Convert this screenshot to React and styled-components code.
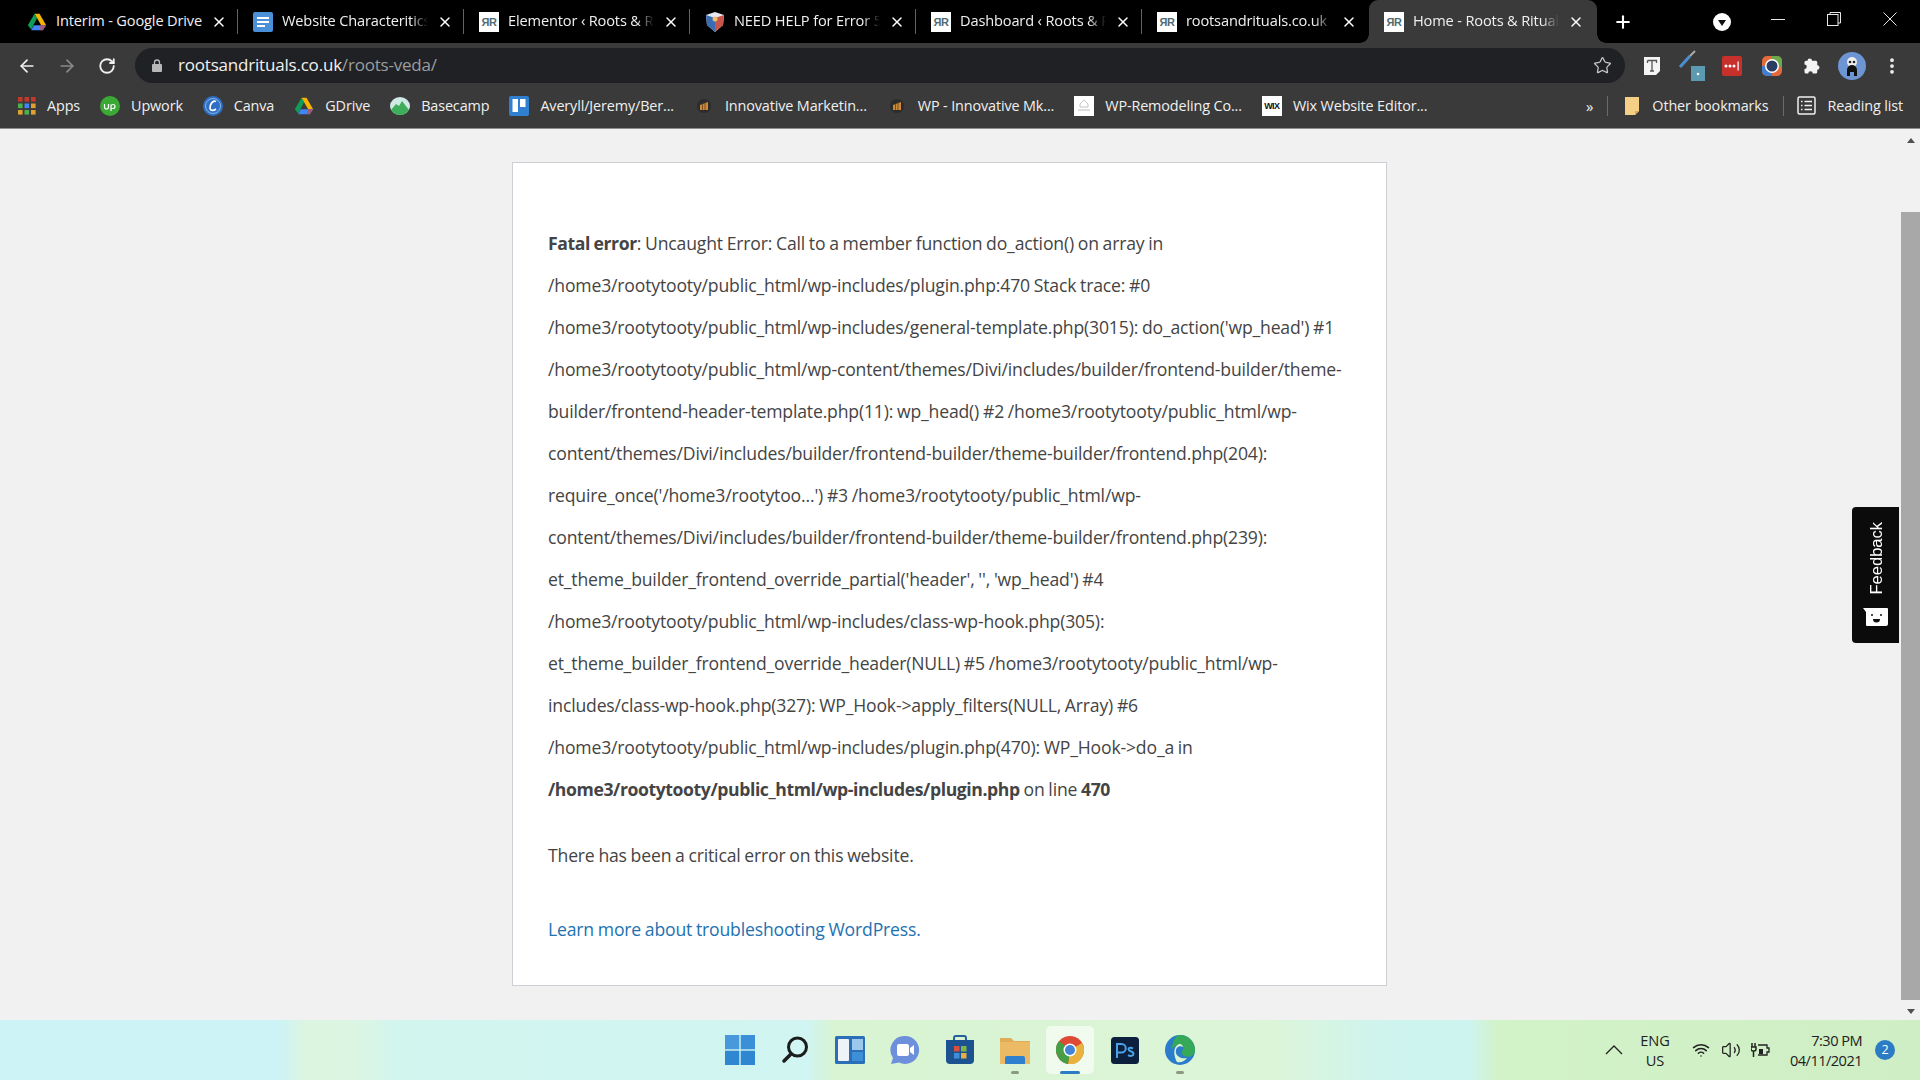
import React from 'react';
import styled, { createGlobalStyle } from 'styled-components';
import { ArrowLeft, ArrowRight, RotateCw, Star, X, Plus, Volume2, Wifi, MoreVertical } from 'lucide-react';

const Global = createGlobalStyle`
  html, body { margin: 0; padding: 0; height: 100%; overflow: hidden; }
  body { font-family: "Open Sans", "Noto Sans", sans-serif; background: #f1f1f1; }
  * { box-sizing: border-box; }
`;

const Screen = styled.div`
  width: 1920px;
  height: 1080px;
  display: flex;
  flex-direction: column;
  overflow: hidden;
`;

const TabStrip = styled.div`
  height: 43px;
  background: #000;
  display: flex;
  align-items: stretch;
  padding-left: 13px;
  flex: none;
`;

const Tab = styled.div`
  position: relative;
  width: ${p => (p.$active ? 228 : 226)}px;
  display: flex;
  align-items: center;
  padding: 0 ${p => (p.$active ? 13 : 12)}px 0 ${p => (p.$active ? 15 : 14)}px;
  gap: 9px;
  color: #f0f0f0;
  background: ${p => (p.$active ? '#3a3a3a' : 'transparent')};
  border-radius: ${p => (p.$active ? '9px 9px 0 0' : '0')};
  &::after {
    content: '';
    display: ${p => (p.$sep ? 'block' : 'none')};
    position: absolute;
    right: 1px;
    top: 9px;
    bottom: 9px;
    width: 1px;
    background: #5f6368;
  }
  &::before {
    content: '';
    display: ${p => (p.$active ? 'block' : 'none')};
    position: absolute;
    left: -9px;
    right: -9px;
    bottom: 0;
    height: 9px;
    z-index: 0;
    background:
      radial-gradient(circle at 0 0, #000 8.5px, #3a3a3a 9px) left bottom / 9px 9px no-repeat,
      radial-gradient(circle at 100% 0, #000 8.5px, #3a3a3a 9px) right bottom / 9px 9px no-repeat;
  }
`;

const Favicon = styled.span`
  width: 20px;
  height: 20px;
  flex: none;
  display: inline-flex;
  align-items: center;
  justify-content: center;
  position: relative;
  z-index: 1;
  background: ${p => (p.$white ? '#fff' : 'transparent')};
  color: ${p => p.$ink || '#4f6b73'};
  font: 700 ${p => p.$size || 11}px "Liberation Sans", sans-serif;
  letter-spacing: -0.5px;
`;

const TabTitle = styled.span`
  flex: 1;
  min-width: 0;
  white-space: nowrap;
  overflow: hidden;
  font-size: 14.6px;
  line-height: 20px;
  margin-top: -3px;
  letter-spacing: -0.15px;
  position: relative;
  z-index: 1;
  -webkit-mask-image: linear-gradient(to right, #000 88%, transparent 100%);
  mask-image: linear-gradient(to right, #000 88%, transparent 100%);
`;

const PlainTitle = styled(TabTitle)`
  -webkit-mask-image: none;
  mask-image: none;
`;

const TabClose = styled(X)`
  flex: none;
  position: relative;
  z-index: 1;
  color: #fff;
`;

const NewTab = styled.div`
  width: 40px;
  margin-left: 6px;
  display: flex;
  align-items: center;
  justify-content: center;
  color: #fff;
`;

const WindowControls = styled.div`
  margin-left: auto;
  padding-right: 2px;
  display: flex;
  align-items: flex-start;
`;

const ProfileDot = styled.div`
  width: 56px;
  height: 43px;
  display: flex;
  align-items: center;
  justify-content: center;
`;

const WinButton = styled.div`
  width: 56px;
  height: 37px;
  display: flex;
  align-items: center;
  justify-content: center;
`;

const Toolbar = styled.div`
  height: 40px;
  background: #3a3a3a;
  display: flex;
  align-items: flex-end;
  padding-left: 7px;
  flex: none;
`;

const NavGroup = styled.div`
  display: flex;
  height: 35px;
  align-items: center;
`;

const NavBtn = styled.div`
  width: 40px;
  display: flex;
  justify-content: center;
  color: ${p => (p.$off ? '#8a8a8a' : '#f0f0f0')};
`;

const Omnibox = styled.div`
  width: 1490px;
  height: 35px;
  margin-left: 8px;
  border-radius: 18px;
  background: #202124;
  display: flex;
  align-items: center;
  padding: 0 13px 0 17px;
  font-size: 17px;
  line-height: 20px;
  letter-spacing: -0.2px;
  color: #f1f1f1;
`;

const UrlText = styled.div`
  margin-left: 16px;
  margin-top: -1px;
  flex: 1;
`;

const UrlPath = styled.span`
  color: #9a9da1;
`;

const Extensions = styled.div`
  display: flex;
  margin-left: 7px;
  height: 35px;
  align-items: center;
`;

const ExtSlot = styled.div`
  width: 40px;
  display: flex;
  justify-content: center;
  align-items: center;
  color: #f1f1f1;
`;

const BookmarkBar = styled.div`
  height: 46px;
  background: #3a3a3a;
  border-bottom: 1px solid #8d8d8d;
  display: flex;
  align-items: center;
  padding: 0 17px 0 18px;
  flex: none;
  color: #f0f0f0;
  font-size: 14.4px;
  letter-spacing: -0.13px;
`;

const Bookmark = styled.div`
  display: flex;
  align-items: center;
  gap: 11px;
  margin-right: 20px;
  white-space: nowrap;
`;

const BarRight = styled.div`
  margin-left: auto;
  display: flex;
  align-items: center;
`;

const Chevrons = styled.span`
  font-size: 15px;
  margin-right: 14px;
`;

const BarSep = styled.span`
  width: 1px;
  height: 20px;
  background: #6a6a6a;
  margin-right: ${p => p.$mr || 16}px;
`;

const BarItem = styled.div`
  display: flex;
  align-items: center;
  gap: 12px;
  margin-right: ${p => p.$mr || 0}px;
`;

const Viewport = styled.div`
  flex: 1;
  min-height: 0;
  display: flex;
  position: relative;
  background: #f1f1f1;
`;

const Page = styled.div`
  flex: 1;
  min-width: 0;
`;

const Card = styled.div`
  width: 875px;
  margin: 33px 0 0 512px;
  height: 824px;
  background: #fff;
  border: 1px solid #ccd0d4;
  padding: 59px 35px 0;
  color: #444;
  font-size: 17.6px;
  letter-spacing: -0.17px;
  word-spacing: -0.6px;
  b { letter-spacing: -0.4px; font-weight: 700; }
`;

const ErrorText = styled.div`
  line-height: 42px;
  white-space: nowrap;
`;

const Notice = styled.div`
  line-height: 30px;
  margin-top: 30px;
`;

const LearnMore = styled.a`
  display: block;
  line-height: 30px;
  margin-top: 44px;
  color: #2271b1;
  text-decoration: none;
`;

const Scrollbar = styled.div`
  width: 19px;
  display: flex;
  flex-direction: column;
  align-items: center;
  padding: 9px 0 6px;
  background: #f1f1f1;
`;

const Arrow = styled.span`
  width: 0;
  height: 0;
  flex: none;
  margin-top: ${p => (p.$down ? 'auto' : '0')};
  border-left: 4.5px solid transparent;
  border-right: 4.5px solid transparent;
  border-${p => (p.$down ? 'top' : 'bottom')}: 5px solid #505050;
`;

const Thumb = styled.div`
  width: 100%;
  height: 788px;
  margin-top: 69px;
  background: #a8a8a8;
`;

const Feedback = styled.div`
  position: absolute;
  right: 21px;
  top: 378px;
  width: 47px;
  height: 136px;
  background: #0b0b0b;
  border-radius: 4px 0 0 4px;
  color: #fff;
  display: flex;
  flex-direction: column;
  align-items: center;
  justify-content: space-between;
  padding: 15px 0 16px;
`;

const FeedbackLabel = styled.span`
  writing-mode: vertical-rl;
  transform: rotate(180deg);
  margin-left: 2px;
  font: 400 16.5px "Liberation Sans", sans-serif;
`;

const Taskbar = styled.div`
  height: 60px;
  flex: none;
  position: relative;
  display: flex;
  align-items: center;
  justify-content: center;
  background: linear-gradient(90deg, #cdf3f6 0%, #cdf3f6 14.5%, #dcf5e0 16%, #dcf5e2 18.5%, #d2f5ee 20.5%, #d0f5f2 42%, #d8f4d2 43.5%, #dcf5d8 66%, #cff4ee 72%, #cdf4f0 76.500%, #d2f2c8 78%, #cfeec5 100%);
`;

const TaskIcons = styled.div`
  display: flex;
  gap: 7px;
`;

const TaskSlot = styled.div`
  position: relative;
  width: 48px;
  height: 48px;
  display: flex;
  align-items: center;
  justify-content: center;
  border-radius: 5px;
  background: ${p => (p.$active ? 'rgba(255,255,255,0.6)' : 'transparent')};
`;

const RunDot = styled.span`
  position: absolute;
  bottom: 0;
  left: 50%;
  transform: translateX(-50%);
  width: ${p => (p.$active ? 20 : 8)}px;
  height: 3px;
  border-radius: 2px;
  background: ${p => (p.$active ? '#2b7cc4' : '#8a9a80')};
`;

const Tray = styled.div`
  position: absolute;
  right: 0;
  top: 0;
  bottom: 0;
  display: flex;
  align-items: center;
  color: #222;
  font-size: 14.6px;
  line-height: 20px;
`;

const TrayIcon = styled.div`
  display: flex;
  align-items: center;
  justify-content: center;
  width: 30px;
`;

const Lang = styled.div`
  width: 50px;
  margin: 0 6px 0 7px;
  text-align: center;
`;

const Clock = styled.div`
  width: 71px;
  text-align: right;
  margin: 0 13px 0 15px;
  white-space: nowrap;
  display: flex;
  flex-direction: column;
  align-items: flex-end;
  letter-spacing: -0.55px;
`;

const Badge = styled.div`
  width: 20px;
  height: 20px;
  margin-right: 25px;
  border-radius: 50%;
  background: #2b7cc4;
  color: #fff;
  font-size: 12.5px;
  display: flex;
  align-items: center;
  justify-content: center;
`;

const DriveIcon = ({ size = 20 }) => (
  <svg width={size} height={size} viewBox="0 0 24 24">
    <path d="M9 2h6l8 14h-6z" fill="#f4b400" />
    <path d="M9 2l3 5.500L5 21l-4-5z" fill="#0f9d58" />
    <path d="M8 16h15l-4 6H5z" fill="#4285f4" />
    <path d="M15.500 16H23l-4 6h-3z" fill="#db4437" opacity=".65" />
  </svg>
);

const DocsIcon = () => (
  <svg width="20" height="20" viewBox="0 0 20 20">
    <rect width="20" height="20" rx="2" fill="#4a90d9" />
    <path d="M4 6h12M4 10h12M4 14h8" stroke="#fff" strokeWidth="2" />
  </svg>
);

const ShieldIcon = () => (
  <svg width="20" height="22" viewBox="0 0 20 22">
    <path d="M1 4l9-3 9 3-1 10-8 7-8-7z" fill="#e8e8f2" />
    <path d="M1 4l9 3v14l-8-7z" fill="#3a6cb5" />
    <path d="M10 7l9-3-1 10-8 7z" fill="#c9544a" />
    <circle cx="10" cy="8" r="2.500" fill="#e8c070" />
  </svg>
);

const RootsMark = () => <Favicon $white>ЯR</Favicon>;

const AppsIcon = () => (
  <svg width="18" height="18" viewBox="0 0 18 18">
    {[['#c0392b', '#c0392b', '#c0392b'], ['#4caf50', '#4285f4', '#e0a030'], ['#e0a030', '#4caf50', '#e0a030']].map((row, y) =>
      row.map((c, x) => <rect key={`${x}${y}`} x={x * 6.5} y={y * 6.5} width="4.6" height="4.6" fill={c} />)
    )}
  </svg>
);

const UpworkIcon = () => (
  <Favicon>
    <svg width="20" height="20" viewBox="0 0 20 20">
      <circle cx="10" cy="10" r="10" fill="#3aaa35" />
      <path d="M4.500 8v3a2 2 0 0 0 4 0V8M11 15V8.500M11 10.500a2 2 0 1 1 2 2h-2" stroke="#fff" strokeWidth="1.200" fill="none" />
    </svg>
  </Favicon>
);

const CanvaIcon = () => (
  <svg width="20" height="20" viewBox="0 0 20 20">
    <circle cx="10" cy="10" r="10" fill="#2f6fc4" />
    <circle cx="10" cy="10" r="7.500" fill="none" stroke="#9cc6f0" strokeWidth=".8" />
    <path d="M13 5.500C9.500 4 6.500 9 7 12.500c.4 2.500 3.500 2.500 6 .5" stroke="#fff" strokeWidth="1.700" fill="none" />
  </svg>
);

const BasecampIcon = () => (
  <svg width="20" height="18" viewBox="0 0 20 18">
    <ellipse cx="10" cy="9" rx="10" ry="9" fill="#cfe9e4" />
    <path d="M1 13l5-6 3 2 3-5 7 9c-2 3-5 5-9 5s-7-2-9-5z" fill="#3fae5a" />
  </svg>
);

const TrelloIcon = () => (
  <svg width="20" height="20" viewBox="0 0 20 20">
    <rect width="20" height="20" rx="2" fill="#2f80d0" />
    <rect x="3.500" y="3" width="5.500" height="13" fill="#fff" />
    <rect x="11" y="3" width="5.500" height="8" fill="#fff" />
  </svg>
);

const FenceIcon = () => (
  <Favicon>
    <svg width="14" height="14" viewBox="0 0 14 14">
      <circle cx="7" cy="7" r="7" fill="#2c2c2c" />
      <path d="M3 6l8-3v8H3z" fill="#c98a3c" />
      <path d="M5.500 5v6M8 4v7" stroke="#7a4f1d" />
    </svg>
  </Favicon>
);

const RemodelIcon = () => (
  <Favicon $white>
    <svg width="14" height="14" viewBox="0 0 14 14">
      <path d="M7 1l4 4v3H3V5z" fill="none" stroke="#c4c4c4" />
      <path d="M1 11h12" stroke="#bdbdbd" />
    </svg>
  </Favicon>
);

const FolderIcon = () => (
  <svg width="16" height="20" viewBox="0 0 16 20">
    <path d="M1 1h14v14l-4 4H1z" fill="#f6cf87" />
    <path d="M11 19v-4h4" fill="#dca653" />
  </svg>
);

const ReadingListIcon = () => (
  <svg width="19" height="19" viewBox="0 0 19 19" fill="none" stroke="#f0f0f0" strokeWidth="1.500">
    <rect x="1" y="1" width="17" height="17" rx="1.500" />
    <path d="M4 5.500h1.500M7.500 5.500H15M4 9.500h1.500M7.500 9.500H15M4 13.500h1.500M7.500 13.500H15" />
  </svg>
);

const ProfileMenu = () => (
  <svg width="18" height="18" viewBox="0 0 18 18">
    <circle cx="9" cy="9" r="9" fill="#fff" />
    <path d="M5 7h8l-4 6z" fill="#111" />
  </svg>
);

const MinimizeIcon = () => (
  <svg width="14" height="14" viewBox="0 0 14 14" stroke="#e8e8e8">
    <path d="M0 7.500h14" />
  </svg>
);

const RestoreIcon = () => (
  <svg width="14" height="14" viewBox="0 0 14 14" fill="none" stroke="#e8e8e8">
    <rect x=".5" y="2.500" width="10.500" height="11" />
    <path d="M3 2.500V.5h10.500v10.500H11" />
  </svg>
);

const CloseWinIcon = () => (
  <svg width="14" height="14" viewBox="0 0 14 14" stroke="#e8e8e8" strokeWidth="1">
    <path d="M.5.5l13 13M13.500.5l-13 13" />
  </svg>
);

const LockIcon = () => (
  <svg width="10" height="13" viewBox="0 0 10 13">
    <path d="M2.500 5V3.500a2.500 2.500 0 0 1 5 0V5" stroke="#b8b8b8" fill="none" strokeWidth="1.300" />
    <rect y="5" width="10" height="8" rx="1" fill="#b8b8b8" />
  </svg>
);

const NotesExt = () => (
  <svg width="16" height="20" viewBox="0 0 16 20">
    <path d="M0 1h16v14l-4 4H0z" fill="#f4f4f4" />
    <path d="M3.500 4.500h9V7M8 4.500V15M6 15h4M3.500 7V4.500" stroke="#555" strokeWidth="1.300" fill="none" />
  </svg>
);

const DropperExt = () => (
  <svg width="28" height="32" viewBox="0 0 28 32">
    <path d="M2 17l10-11" stroke="#4a8fd0" strokeWidth="3" />
    <path d="M12 6l5-5" stroke="#aaa" strokeWidth="2" />
    <rect x="13" y="16" width="14" height="15" fill="#5b9ab0" />
    <circle cx="20" cy="24" r="1.300" fill="#fff" />
  </svg>
);

const LastPassExt = () => (
  <svg width="20" height="20" viewBox="0 0 20 20">
    <rect width="20" height="20" rx="2" fill="#c8302b" />
    <circle cx="4" cy="10" r="1.500" fill="#fff" />
    <circle cx="8" cy="10" r="1.500" fill="#fff" />
    <circle cx="12" cy="10" r="1.500" fill="#fff" />
    <rect x="15.500" y="5.500" width="1.200" height="9" fill="#fff" />
  </svg>
);

const PocketExt = () => (
  <svg width="20" height="22" viewBox="0 0 20 22">
    <rect y="1" width="20" height="20" rx="5" fill="#e36a3a" />
    <path d="M10 1h5a5 5 0 0 1 5 5v6H10z" fill="#6aaa4a" />
    <path d="M0 11h10v10H5a5 5 0 0 1-5-5z" fill="#3f7fd0" />
    <circle cx="10" cy="11" r="7" fill="#fff" />
    <circle cx="10" cy="11" r="5.500" fill="#2b3d63" />
  </svg>
);

const PuzzleExt = () => (
  <svg width="18" height="18" viewBox="0 0 24 24" fill="#f4f4f4">
    <path d="M9 2a3 3 0 0 1 3 3h5a2 2 0 0 1 2 2v4a3 3 0 1 1 0 6v3a2 2 0 0 1-2 2h-4a3 3 0 1 0-6 0H4a2 2 0 0 1-2-2v-4a3 3 0 1 0 0-6V7a2 2 0 0 1 2-2h2a3 3 0 0 1 3-3z" />
  </svg>
);

const AvatarExt = () => (
  <svg width="28" height="28" viewBox="0 0 28 28">
    <circle cx="14" cy="14" r="14" fill="#6d95d3" />
    <circle cx="14" cy="10" r="5" fill="#eee" />
    <circle cx="12" cy="10" r="1.300" fill="#222" />
    <circle cx="16" cy="10" r="1.300" fill="#222" />
    <path d="M9 24v-6a5 5 0 0 1 10 0v6h-3v-4h-4v4z" fill="#111" />
  </svg>
);

const FeedbackFace = () => (
  <svg width="26" height="20" viewBox="0 0 26 20">
    <path d="M0 1h24a1 1 0 0 1 1 1v15a2 2 0 0 1-2 2H4a1 1 0 0 1-1-1V5z" fill="#fff" />
    <circle cx="9" cy="8" r="1" fill="#111" />
    <circle cx="18" cy="8" r="1" fill="#111" />
    <path d="M10 12h7a3.500 3.500 0 0 1-7 0z" fill="#111" />
  </svg>
);

const StartIcon = () => (
  <svg width="30" height="30" viewBox="0 0 30 30" fill="#2f86d1">
    <rect width="14.300" height="14.300" fill="#4898dc" />
    <rect x="15.700" width="14.300" height="14.300" fill="#3a90d8" />
    <rect y="15.700" width="14.300" height="14.300" />
    <rect x="15.700" y="15.700" width="14.300" height="14.300" />
  </svg>
);

const SearchIcon = () => (
  <svg width="28" height="28" viewBox="0 0 28 28" fill="none" stroke="#1c1c1c">
    <circle cx="16.500" cy="11" r="9" strokeWidth="3" />
    <path d="M10 18l-7 7" strokeWidth="3.500" strokeLinecap="round" />
  </svg>
);

const WidgetsIcon = () => (
  <svg width="30" height="28" viewBox="0 0 30 28">
    <rect width="30" height="28" rx="1.500" fill="#2a6fb8" />
    <rect x="3" y="3" width="11" height="22" rx="1" fill="#eef3f8" />
    <rect x="17" y="3" width="11" height="11" fill="#9cc8ec" />
    <rect x="17" y="16" width="11" height="9" fill="#3d8fd6" />
  </svg>
);

const ChatIcon = () => (
  <svg width="30" height="30" viewBox="0 0 30 30">
    <path d="M15 1a14 14 0 1 1-6 26.600L1 29l2-6A14 14 0 0 1 15 1z" fill="#6d8fdc" />
    <rect x="7" y="9" width="12" height="12" rx="2" fill="#fff" />
    <path d="M20 13l4-3v10l-4-3z" fill="#fff" />
  </svg>
);

const StoreIcon = () => (
  <svg width="30" height="30" viewBox="0 0 30 30">
    <path d="M9 6V3a2 2 0 0 1 2-2h8a2 2 0 0 1 2 2v3" fill="none" stroke="#245f9e" strokeWidth="2" />
    <path d="M1 5h28v20a4 4 0 0 1-4 4H5a4 4 0 0 1-4-4z" fill="#1d5290" />
    <rect x="9" y="11" width="5.500" height="5.500" fill="#d94f3b" />
    <rect x="16" y="11" width="5.500" height="5.500" fill="#7fb545" />
    <rect x="9" y="18" width="5.500" height="5.500" fill="#3f8fd8" />
    <rect x="16" y="18" width="5.500" height="5.500" fill="#e6ae40" />
  </svg>
);

const ExplorerIcon = () => (
  <svg width="30" height="27" viewBox="0 0 30 27">
    <path d="M0 1h11l3 3h16v23H0z" fill="#e2ab57" />
    <path d="M0 5h30v22H0z" fill="#ecb965" />
    <path d="M5 21a2 2 0 0 1 2-2h16a2 2 0 0 1 2 2v6H5z" fill="#2f80cf" />
  </svg>
);

const ChromeIcon = () => (
  <svg width="28" height="28" viewBox="0 0 28 28">
    <circle cx="14" cy="14" r="14" fill="#dd4b35" />
    <path d="M14 14L2 21A14 14 0 0 1 3 5z" fill="#43a047" />
    <path d="M14 14l12-7a14 14 0 0 1-14 21z" fill="#e8b23c" />
    <path d="M14 14L2 21a14 14 0 0 0 10 7z" fill="#43a047" />
    <circle cx="14" cy="14" r="6.500" fill="#fff" />
    <circle cx="14" cy="14" r="5" fill="#4285d8" />
  </svg>
);

const PsIcon = () => (
  <svg width="28" height="27" viewBox="0 0 28 27">
    <rect width="28" height="27" rx="3.500" fill="#0c1f3d" />
    <path d="M6 21V7h4.500a4 4 0 0 1 0 8.500H6M22 11.500c-2-1.200-4.500-1-4.500.8 0 2.400 5 1.400 5 4.500 0 2.200-3.200 2.700-5.500 1.300" stroke="#4aa2e8" strokeWidth="2" fill="none" />
  </svg>
);

const EdgeIcon = () => (
  <svg width="30" height="30" viewBox="0 0 30 30">
    <circle cx="15" cy="15" r="15" fill="#2b7ccb" />
    <path d="M15 0a15 15 0 0 1 15 15c0 6-6 8-11 6-3-1.500-3-5-1-6 1-3-1-5-3-5-4 0-7 2-9 5C8 5 11 0 15 0z" fill="#35a85a" />
    <path d="M18 12c-4-2-8 1-7 6 1 4 6 6 11 5-3 4-7 5-10 4C9 22 7 12 14 9c2-.5 4 1 4 3z" fill="#d9f4d0" />
  </svg>
);

const BatteryIcon = () => (
  <svg width="20" height="16" viewBox="0 0 20 16" fill="none" stroke="#222" strokeWidth="1.300">
    <path d="M7 3h9v3h2v4h-2v3H7" />
    <rect x="8" y="7" width="4" height="5" fill="#222" stroke="none" />
    <path d="M1 1v4M4 1v4M0 5h5v2a2 2 0 0 1-2 2h-1a2 2 0 0 1-2-2zM2.500 9v6" strokeWidth="1.500" />
  </svg>
);

const TrayChevron = () => (
  <svg width="18" height="20" viewBox="0 0 18 20" fill="none" stroke="#222" strokeWidth="1.300">
    <path d="M1 14l8-8 8 8" />
  </svg>
);

const tabs = [
  { icon: <DriveIcon />, title: 'Interim - Google Drive', plain: true, sep: true },
  { icon: <DocsIcon />, title: 'Website Characteritics of a site', sep: true },
  { icon: <RootsMark />, title: 'Elementor ‹ Roots & Rituals — W', sep: true },
  { icon: <ShieldIcon />, title: 'NEED HELP for Error 500 - Wor', sep: true },
  { icon: <RootsMark />, title: 'Dashboard ‹ Roots & Rituals — W', sep: true },
  { icon: <RootsMark />, title: 'rootsandrituals.co.uk | Home' },
  { icon: <RootsMark />, title: 'Home - Roots & Rituals', active: true },
];

const bookmarks = [
  { icon: <AppsIcon />, label: 'Apps' },
  { icon: <UpworkIcon />, label: 'Upwork' },
  { icon: <CanvaIcon />, label: 'Canva' },
  { icon: <DriveIcon />, label: 'GDrive' },
  { icon: <BasecampIcon />, label: 'Basecamp' },
  { icon: <TrelloIcon />, label: 'Averyll/Jeremy/Ber...' },
  { icon: <FenceIcon />, label: 'Innovative Marketin...' },
  { icon: <FenceIcon />, label: 'WP - Innovative Mk...' },
  { icon: <RemodelIcon />, label: 'WP-Remodeling Co...' },
  { icon: <Favicon $white $ink="#111" $size={9}>WIX</Favicon>, label: 'Wix Website Editor...' },
];

const taskIcons = [
  { icon: <StartIcon /> },
  { icon: <SearchIcon /> },
  { icon: <WidgetsIcon /> },
  { icon: <ChatIcon /> },
  { icon: <StoreIcon /> },
  { icon: <ExplorerIcon />, running: true },
  { icon: <ChromeIcon />, running: true, active: true },
  { icon: <PsIcon /> },
  { icon: <EdgeIcon />, running: true },
];

export default function App() {
  return (
    <Screen>
      <Global />
      <TabStrip>
        {tabs.map(t => {
          const Title = t.plain ? PlainTitle : TabTitle;
          return (
            <Tab key={t.title} $active={t.active} $sep={t.sep}>
              {t.icon}
              <Title>{t.title}</Title>
              <TabClose size={16} strokeWidth={2.2} />
            </Tab>
          );
        })}
        <NewTab><Plus size={20} strokeWidth={2.5} /></NewTab>
        <WindowControls>
          <ProfileDot><ProfileMenu /></ProfileDot>
          <WinButton><MinimizeIcon /></WinButton>
          <WinButton><RestoreIcon /></WinButton>
          <WinButton><CloseWinIcon /></WinButton>
        </WindowControls>
      </TabStrip>

      <Toolbar>
        <NavGroup>
          <NavBtn><ArrowLeft size={20} /></NavBtn>
          <NavBtn $off><ArrowRight size={20} /></NavBtn>
          <NavBtn><RotateCw size={18} strokeWidth={2.4} /></NavBtn>
        </NavGroup>
        <Omnibox>
          <LockIcon />
          <UrlText>rootsandrituals.co.uk<UrlPath>/roots-veda/</UrlPath></UrlText>
          <Star size={19} strokeWidth={1.6} color="#c8c8c8" />
        </Omnibox>
        <Extensions>
          <ExtSlot><NotesExt /></ExtSlot>
          <ExtSlot><DropperExt /></ExtSlot>
          <ExtSlot><LastPassExt /></ExtSlot>
          <ExtSlot><PocketExt /></ExtSlot>
          <ExtSlot><PuzzleExt /></ExtSlot>
          <ExtSlot><AvatarExt /></ExtSlot>
          <ExtSlot><MoreVertical size={20} strokeWidth={2.5} /></ExtSlot>
        </Extensions>
      </Toolbar>

      <BookmarkBar>
        {bookmarks.map(b => (
          <Bookmark key={b.label}>{b.icon}{b.label}</Bookmark>
        ))}
        <BarRight>
          <Chevrons>»</Chevrons>
          <BarSep />
          <BarItem $mr={14}><FolderIcon />Other bookmarks</BarItem>
          <BarSep $mr={13} />
          <BarItem><ReadingListIcon />Reading list</BarItem>
        </BarRight>
      </BookmarkBar>

      <Viewport>
        <Page>
          <Card>
            <ErrorText>
              <b>Fatal error</b>: Uncaught Error: Call to a member function do_action() on array in<br />
              /home3/rootytooty/public_html/wp-includes/plugin.php:470 Stack trace: #0<br />
              /home3/rootytooty/public_html/wp-includes/general-template.php(3015): do_action('wp_head') #1<br />
              /home3/rootytooty/public_html/wp-content/themes/Divi/includes/builder/frontend-builder/theme-<br />
              builder/frontend-header-template.php(11): wp_head() #2 /home3/rootytooty/public_html/wp-<br />
              content/themes/Divi/includes/builder/frontend-builder/theme-builder/frontend.php(204):<br />
              require_once('/home3/rootytoo...') #3 /home3/rootytooty/public_html/wp-<br />
              content/themes/Divi/includes/builder/frontend-builder/theme-builder/frontend.php(239):<br />
              et_theme_builder_frontend_override_partial('header', '', 'wp_head') #4<br />
              /home3/rootytooty/public_html/wp-includes/class-wp-hook.php(305):<br />
              et_theme_builder_frontend_override_header(NULL) #5 /home3/rootytooty/public_html/wp-<br />
              includes/class-wp-hook.php(327): WP_Hook-&gt;apply_filters(NULL, Array) #6<br />
              /home3/rootytooty/public_html/wp-includes/plugin.php(470): WP_Hook-&gt;do_a in<br />
              <b>/home3/rootytooty/public_html/wp-includes/plugin.php</b> on line <b>470</b>
            </ErrorText>
            <Notice>There has been a critical error on this website.</Notice>
            <LearnMore href="#">Learn more about troubleshooting WordPress.</LearnMore>
          </Card>
        </Page>
        <Scrollbar>
          <Arrow />
          <Thumb />
          <Arrow $down />
        </Scrollbar>
        <Feedback>
          <FeedbackLabel>Feedback</FeedbackLabel>
          <FeedbackFace />
        </Feedback>
      </Viewport>

      <Taskbar>
        <TaskIcons>
          {taskIcons.map((t, i) => (
            <TaskSlot key={i} $active={t.active}>
              {t.icon}
              {t.running && <RunDot $active={t.active} />}
            </TaskSlot>
          ))}
        </TaskIcons>
        <Tray>
          <TrayChevron />
          <Lang>ENG<br />US</Lang>
          <TrayIcon><Wifi size={18} /></TrayIcon>
          <TrayIcon><Volume2 size={20} strokeWidth={1.5} /></TrayIcon>
          <TrayIcon><BatteryIcon /></TrayIcon>
          <Clock><span>7:30 PM</span><span>04/11/2021</span></Clock>
          <Badge>2</Badge>
        </Tray>
      </Taskbar>
    </Screen>
  );
}
